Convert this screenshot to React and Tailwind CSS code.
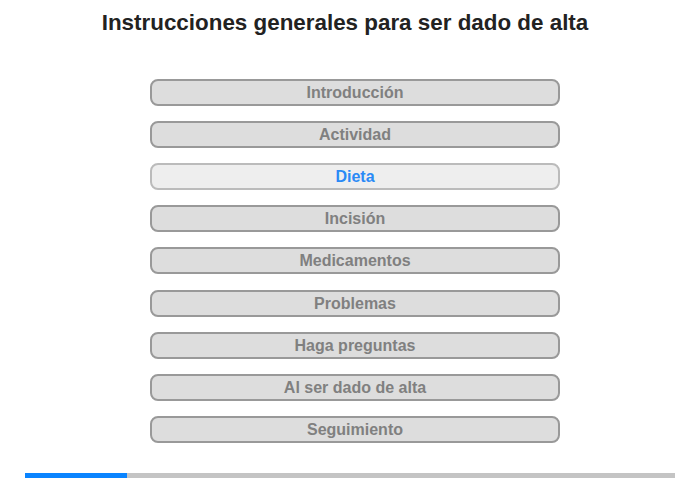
import React from "react";

const items = [
  "Introducción",
  "Actividad",
  "Dieta",
  "Incisión",
  "Medicamentos",
  "Problemas",
  "Haga preguntas",
  "Al ser dado de alta",
  "Seguimiento",
];

export default function App() {
  return (
    <div className="w-[700px] h-[480px] bg-white font-['Liberation_Sans',Arial,sans-serif] flex flex-col">
      <h1 className="mt-[10px] pr-[10px] text-center text-[22.4px] leading-[26px] font-bold text-[#222222]">
        Instrucciones generales para ser dado de alta
      </h1>
      <div className="mt-[43px] ml-[150px] w-[410px] flex flex-col gap-[15px]">
        {items.map((t, i) => {
          const active = t === "Dieta";
          return (
            <div
              key={t}
              className={
                (i === 5 ? "mt-[1px] " : "") +
                (active
                  ? "h-[27px] rounded-[8px] border-2 border-[#bbbbbb] bg-[#eeeeee] flex items-center justify-center text-[16px] font-bold text-[#2a8af6]"
                  : "h-[27px] rounded-[8px] border-2 border-[#999999] bg-[#dddddd] flex items-center justify-center text-[16px] font-bold text-[#808080]")
              }
            >
              {t}
            </div>
          );
        })}
      </div>
      <div className="mt-[30px] ml-[25px] w-[650px] h-[5px] bg-[#c4c4c4] flex">
        <div className="w-[102px] h-full bg-[#0a84ff]" />
      </div>
    </div>
  );
}
